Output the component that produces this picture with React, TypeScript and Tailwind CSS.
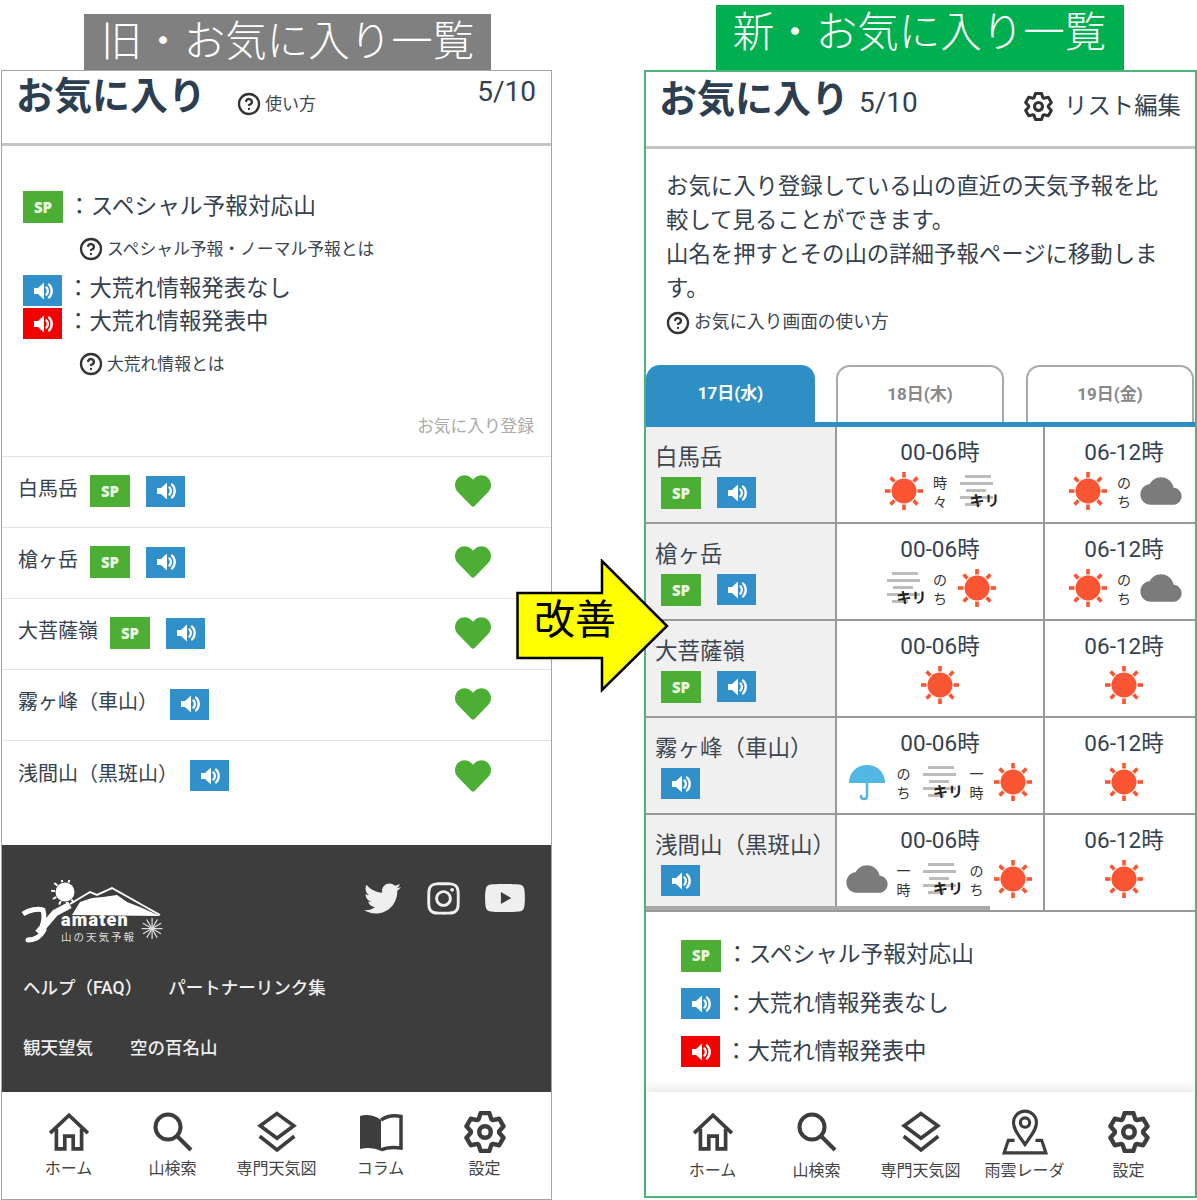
import React from 'react';
import { CircleHelp } from 'lucide-react';
import { FaHeart, FaInstagram, FaTwitter, FaYoutube } from 'react-icons/fa';
import { IoMdCloud } from 'react-icons/io';

const Speaker = () => (
  <svg viewBox="0 0 24 24" className="w-[24px] h-[24px]">
    <path d="M3 9h4l6-5.500v17L7 15H3z" fill="#fff" />
    <path d="M15.500 8.500c1.800 2 1.800 5 0 7M18 5.500c3.600 3.500 3.600 9.500 0 13" fill="none" stroke="#fff" strokeWidth="2.400" strokeLinecap="round" />
  </svg>
);

const SpBadge = () => (
  <span className="flex h-[32px] w-[40px] shrink-0 items-center justify-center bg-[#4cae34] font-['Open_Sans',sans-serif] text-[15px] font-extrabold text-[#e8f5e0]">
    SP
  </span>
);

const SoundBadge = ({ red }: { red?: boolean }) => (
  <span className={`flex h-[31px] w-[39px] shrink-0 items-center justify-center ${red ? 'bg-[#f50000]' : 'bg-[#3190c9]'}`}>
    <Speaker />
  </span>
);

const Help = ({ label, size }: { label: string; size: string }) => (
  <span className={`flex items-center gap-[4px] leading-none text-[#3b4650] ${size}`}>
    <CircleHelp size={24} strokeWidth={2.300} className="text-[#333]" />
    {label}
  </span>
);

const Sun = () => (
  <svg viewBox="0 0 40 40" className="w-[40px] h-[40px] shrink-0">
    <circle cx="20" cy="20" r="12.500" fill="#fa5532" />
    {[0, 45, 90, 135, 180, 225, 270, 315].map((a) => (
      <rect key={a} x="18.200" y="1" width="3.600" height="5.500" fill="#fa5532" transform={`rotate(${a} 20 20)`} />
    ))}
  </svg>
);

const Fog = () => (
  <span className="relative block h-[36px] w-[40px] shrink-0">
    <span className="absolute left-[8px] top-[2px] h-[3px] w-[26px] bg-[#bcbcbc]" />
    <span className="absolute left-[3px] top-[9px] h-[3px] w-[33px] bg-[#bcbcbc]" />
    <span className="absolute left-[9px] top-[16px] h-[3px] w-[20px] bg-[#bcbcbc]" />
    <span className="absolute left-[3px] top-[23px] h-[3px] w-[33px] bg-[#bcbcbc]" />
    <span className="absolute left-[8px] top-[30px] h-[3px] w-[16px] bg-[#bcbcbc]" />
    <span className="absolute left-[13px] top-[19px] whitespace-nowrap text-[15px] font-bold leading-[18px] text-[#222]">キリ</span>
  </span>
);

const Cloud = () => <IoMdCloud className="h-[44px] w-[44px] shrink-0 text-[#7b7b7b]" />;

const Umbrella = () => (
  <svg viewBox="0 0 40 40" className="w-[40px] h-[40px] shrink-0">
    <path d="M2 21C2 10 10 3 20 3s18 7 18 18z" fill="#53b7e3" />
    <path d="M20 20v14c0 4-6 4-6 0" fill="none" stroke="#53b7e3" strokeWidth="2.500" strokeLinecap="round" />
  </svg>
);

const Join = ({ a, b }: { a: string; b: string }) => (
  <span className="flex flex-col items-center pt-[4px] text-[14px] leading-[19px] text-[#333]">
    <span>{a}</span>
    <span>{b}</span>
  </span>
);

const Slot = ({ children }: { children: React.ReactNode }) => (
  <span className="flex w-[36.500px] justify-center">{children}</span>
);

const icons: Record<string, React.ReactNode> = {
  sun: <Sun />,
  fog: <Fog />,
  cloud: <Cloud />,
  rain: <Umbrella />,
  tokidoki: <Join a="時" b="々" />,
  nochi: <Join a="の" b="ち" />,
  ichiji: <Join a="一" b="時" />,
};

const HomeIcon = () => (
  <svg viewBox="0 0 40 40" fill="none" stroke="#3d3d3d" strokeWidth="3.500" className="h-[42px] w-[42px]">
    <path d="M2 21 20 4l18 17" />
    <path d="M8 17v19h8V24h8v12h8V17" />
  </svg>
);

const SearchIcon = () => (
  <svg viewBox="0 0 40 40" fill="none" stroke="#3d3d3d" strokeWidth="4" className="h-[40px] w-[40px]">
    <circle cx="15" cy="15" r="12.500" />
    <path d="m24 24 14 14" />
  </svg>
);

const LayersIcon = () => (
  <svg viewBox="0 0 40 40" fill="none" stroke="#3d3d3d" strokeWidth="3.500" className="h-[42px] w-[42px]">
    <path d="M20 2.500 36 14 20 26 4 14z" />
    <path d="M3.500 24 20 37l16.500-13" />
  </svg>
);

const BookIcon = () => (
  <svg viewBox="0 0 46 40" className="h-[40px] w-[46px]">
    <path d="M23 8C17 3 8 2 2 4v33c7-2 15-1 21 2z" fill="#3d3d3d" />
    <path d="M23 8c6-4 13-5 20-3.500V36c-7-1-14-1-20 2" fill="none" stroke="#3d3d3d" strokeWidth="3.500" />
  </svg>
);

const PinIcon = () => (
  <svg viewBox="0 0 46 44" fill="none" stroke="#3d3d3d" strokeWidth="3" className="h-[46px] w-[48px]">
    <path d="M23 34c-6-9-11-14-11-21a11 11 0 0 1 22 0c0 7-5 12-11 21z" />
    <circle cx="23" cy="13" r="4.500" />
    <path d="M13 30H7L3 42h40l-4-12h-6" />
  </svg>
);

// six square teeth, worked out from polar points
const gearPath = [0, 60, 120, 180, 240, 300]
  .flatMap((a) =>
    [
      [a - 27, 13.500],
      [a - 13, 18.500],
      [a + 13, 18.500],
      [a + 27, 13.500],
    ].map(([deg, r]) => {
      const rad = (deg * Math.PI) / 180;
      return `${(20 + r * Math.sin(rad)).toFixed(2)} ${(20 - r * Math.cos(rad)).toFixed(2)}`;
    }),
  )
  .join(' L');

const Gear = ({ size, color }: { size: string; color: string }) => (
  <svg viewBox="0 0 40 40" fill="none" stroke={color} strokeWidth="4.200" strokeLinejoin="round" className={size}>
    <path d={`M${gearPath}Z`} />
    <circle cx="20" cy="20" r="5.500" />
  </svg>
);

const GearIcon = () => <Gear size="h-[42px] w-[42px]" color="#3d3d3d" />;

const TabItem = ({ icon, label, gap }: { icon: React.ReactNode; label: string; gap: string }) => (
  <div className="flex w-[104px] flex-col items-center">
    <div className="flex h-[46px] items-center justify-center">{icon}</div>
    <span className={`whitespace-nowrap text-[16px] leading-[20px] text-[#444] ${gap}`}>{label}</span>
  </div>
);

const Logo = () => (
  <svg viewBox="0 0 145 65" className="h-[65px] w-[145px]">
    <circle cx="45" cy="12" r="9.500" fill="#fff" />
    {[170, 205, 240, 275, 310, 345, 20, 140].map((a) => (
      <rect key={a} x="44" y="-2" width="2" height="4" fill="#fff" transform={`rotate(${a} 45 12)`} />
    ))}
    <path d="M50 24 70 12l7 3L92 8l48 27" fill="none" stroke="#fff" strokeWidth="2" />
    <path d="M52 35 60 22l12-4 11-1 14-2 10 7 13 5 20 9z" fill="#fff" />
    <path d="M3 34C9 30 18 28 23 30 25 38 24 42 22 46" fill="none" stroke="#fff" strokeWidth="5" />
    <path d="M50 25 35 33 18 53" fill="none" stroke="#fff" strokeWidth="7" />
    <path d="M8 60c6 0 12-2 16-10" fill="none" stroke="#fff" strokeWidth="5" strokeLinecap="round" />
    <text x="41" y="46" fill="#fff" fontSize="18" fontWeight="900" letterSpacing="1.200">amaten</text>
    <text x="41" y="61" fill="#ddd" fontSize="10.500" letterSpacing="2">山の天気予報</text>
    {[0, 30, 60, 90, 120, 150].map((a) => (
      <rect key={a} x="131.500" y="38" width="1.200" height="21" fill="#ddd" transform={`rotate(${a} 132 48.500)`} />
    ))}
  </svg>
);

const TITLE = 'text-[38px] font-bold leading-[46px] text-[#2c3e50]';
const LEGEND = 'text-[22.400px] leading-[30px] text-[#34414e]';
const LEGEND_SP = 'text-[22.700px] leading-[30px] text-[#34414e]';

const oldRows = [
  { name: '白馬岳', sp: true },
  { name: '槍ヶ岳', sp: true },
  { name: '大菩薩嶺', sp: true },
  { name: '霧ヶ峰（車山）', sp: false },
  { name: '浅間山（黒斑山）', sp: false },
];

const weather = [
  { name: '白馬岳', sp: true, a: ['sun', 'tokidoki', 'fog'], b: ['sun', 'nochi', 'cloud'] },
  { name: '槍ヶ岳', sp: true, a: ['fog', 'nochi', 'sun'], b: ['sun', 'nochi', 'cloud'] },
  { name: '大菩薩嶺', sp: true, a: ['sun'], b: ['sun'] },
  { name: '霧ヶ峰（車山）', sp: false, a: ['rain', 'nochi', 'fog', 'ichiji', 'sun'], b: ['sun'] },
  { name: '浅間山（黒斑山）', sp: false, a: ['cloud', 'ichiji', 'fog', 'nochi', 'sun'], b: ['sun'] },
];

const WeatherCell = ({ time, items, border }: { time: string; items: string[]; border?: boolean }) => (
  <div className={`flex h-[97px] flex-col items-center border-b-2 border-[#999] bg-white pt-[10px] ${border ? 'border-r-2' : ''}`}>
    <span className="text-[22.500px] leading-[30px] text-[#34414e]">{time}</span>
    <div className="mt-[4px] flex h-[40px] items-center">
      {items.map((it, i) => (
        <Slot key={i}>{icons[it]}</Slot>
      ))}
    </div>
  </div>
);

const OldPanel = () => (
  <div className="ml-px flex h-[1130px] w-[551px] flex-col border border-[#a5a5a5] bg-white">
    <div className="flex h-[75px] shrink-0 items-start justify-between border-b-[3px] border-[#c4c4c4] pl-[14px] pr-[15px]">
      <div className="flex items-start pt-[2px]">
        <span className={TITLE}>お気に入り</span>
        <span className="ml-[31px] mt-[19px]">
          <Help label="使い方" size="text-[17px]" />
        </span>
      </div>
      <span className="mt-[3px] text-[28px] leading-[36px] text-[#34414e]">5/10</span>
    </div>
    <div className="flex h-[311px] shrink-0 flex-col border-b border-[#e3e3e3] pl-[21px]">
      <div className="mt-[45px] flex h-[32px] items-center gap-[5px]">
        <SpBadge />
        <span className={LEGEND_SP}>：スペシャル予報対応山</span>
      </div>
      <div className="ml-[56px] mt-[14px]">
        <Help label="スペシャル予報・ノーマル予報とは" size="text-[16.800px]" />
      </div>
      <div className="mt-[14px] flex h-[31px] items-center gap-[5px]">
        <SoundBadge />
        <span className={`${LEGEND} pb-[5px]`}>：大荒れ情報発表なし</span>
      </div>
      <div className="mt-[2px] flex h-[31px] items-center gap-[5px]">
        <SoundBadge red />
        <span className={`${LEGEND} pb-[5px]`}>：大荒れ情報発表中</span>
      </div>
      <div className="ml-[56px] mt-[13px]">
        <Help label="大荒れ情報とは" size="text-[16.800px]" />
      </div>
      <span className="mr-[17px] mt-[39px] self-end text-[16.700px] leading-[24px] text-[#aaa]">お気に入り登録</span>
    </div>
    {oldRows.map((r, i) => (
      <div key={r.name} className={`flex h-[71px] shrink-0 items-center justify-between pb-[2px] pl-[16px] pr-[60px] ${i < 4 ? 'border-b border-[#e3e3e3]' : ''}`}>
        <div className="flex items-center gap-[12px]">
          <span className="pb-[4px] text-[20px] leading-[28px] text-[#34414e]">{r.name}</span>
          {r.sp && <SpBadge />}
          <span className={r.sp ? 'ml-[4px]' : ''}>
            <SoundBadge />
          </span>
        </div>
        <FaHeart className="h-[36px] w-[36px] text-[#4cae34]" />
      </div>
    ))}
    <div className="mt-[33px] flex h-[247px] shrink-0 flex-col bg-[#3d3d3d] pl-[21px] pr-[25px]">
      <div className="flex items-start justify-between">
        <div className="-ml-[3px] mt-[35px]">
          <Logo />
        </div>
        <div className="mt-[32px] flex items-center text-[#efefef]">
          <FaTwitter className="h-[37px] w-[37px]" />
          <FaInstagram className="ml-[24px] h-[37px] w-[37px]" />
          <FaYoutube className="ml-[22px] h-[42px] w-[42px]" />
        </div>
      </div>
      <div className="mt-[30px] flex gap-[26px] text-[17.500px] leading-[26px] font-medium text-[#eee]">
        <span>ヘルプ（FAQ）</span>
        <span>パートナーリンク集</span>
      </div>
      <div className="mt-[34px] flex gap-[37px] text-[17.500px] leading-[26px] font-medium text-[#eee]">
        <span>観天望気</span>
        <span>空の百名山</span>
      </div>
    </div>
    <div className="flex flex-1 justify-center pt-[17px]">
      <TabItem gap="mt-[4px]" icon={<HomeIcon />} label="ホーム" />
      <TabItem gap="mt-[4px]" icon={<SearchIcon />} label="山検索" />
      <TabItem gap="mt-[4px]" icon={<LayersIcon />} label="専門天気図" />
      <TabItem gap="mt-[4px]" icon={<BookIcon />} label="コラム" />
      <TabItem gap="mt-[4px]" icon={<GearIcon />} label="設定" />
    </div>
  </div>
);

const NewPanel = () => (
  <div className="flex h-[1128px] w-[553px] flex-col border-2 border-[#4cb37a] bg-white">
    <div className="flex h-[77px] shrink-0 items-start justify-between border-b-[3px] border-[#c4c4c4] pl-[13px] pr-[14px]">
      <div className="flex items-end pt-[4px]">
        <span className={TITLE}>お気に入り</span>
        <span className="ml-[10px] pb-[1px] text-[28px] leading-[36px] text-[#34414e]">5/10</span>
      </div>
      <div className="mt-[18px] flex items-center gap-[11px]">
        <Gear size="h-[29px] w-[29px]" color="#333" />
        <span className="text-[23.400px] leading-[32px] text-[#34414e]">リスト編集</span>
      </div>
    </div>
    <div className="h-[216px] shrink-0 px-[20px] pt-[20px]">
      <p className="w-[500px] text-[22.400px] leading-[34px] text-[#34414e]">
        お気に入り登録している山の直近の天気予報を比較して見ることができます。
        <br />
        山名を押すとその山の詳細予報ページに移動します。
      </p>
      <div className="mt-[6px]">
        <Help label="お気に入り画面の使い方" size="text-[17.700px]" />
      </div>
    </div>
    <div className="flex h-[62px] shrink-0 items-stretch gap-[21px] border-b-[5px] border-[#2e8fc5]">
      <div className="flex w-[169px] items-center justify-center rounded-t-[14px] bg-[#2e8fc5] text-[17px] font-bold text-white">17日(水)</div>
      <div className="flex w-[168px] items-center justify-center rounded-t-[14px] border-2 border-b-0 border-[#aaa] text-[17px] font-bold text-[#888]">18日(木)</div>
      <div className="ml-px flex w-[168px] items-center justify-center rounded-t-[14px] border-2 border-b-0 border-[#aaa] text-[17px] font-bold text-[#888]">19日(金)</div>
    </div>
    <div className="relative grid shrink-0 grid-cols-[191px_208px_158px] overflow-hidden">
      {weather.map((w) => (
        <React.Fragment key={w.name}>
          <div className="flex h-[97px] flex-col border-b-2 border-r-2 border-[#999] bg-[#f0f0f0] pl-[9px] pt-[15px]">
            <span className="whitespace-nowrap text-[22.500px] leading-[30px] text-[#3b4650]">{w.name}</span>
            <div className="ml-[6px] mt-[5px] flex gap-[16px]">
              {w.sp && <SpBadge />}
              <SoundBadge />
            </div>
          </div>
          <WeatherCell time="00-06時" items={w.a} border />
          <WeatherCell time="06-12時" items={w.b} />
        </React.Fragment>
      ))}
      <div className="absolute bottom-[2px] left-0 h-[4px] w-[344px] bg-[#aaa]" />
    </div>
    <div className="flex shrink-0 flex-col gap-[17px] pl-[35px] pt-[28px]">
      <div className="flex h-[31px] items-center gap-[5px]">
        <SpBadge />
        <span className={`${LEGEND_SP} pb-[2px]`}>：スペシャル予報対応山</span>
      </div>
      <div className="flex h-[31px] items-center gap-[5px]">
        <SoundBadge />
        <span className={`${LEGEND} pb-[2px]`}>：大荒れ情報発表なし</span>
      </div>
      <div className="flex h-[31px] items-center gap-[5px]">
        <SoundBadge red />
        <span className={`${LEGEND} pb-[2px]`}>：大荒れ情報発表中</span>
      </div>
    </div>
    <div className="mt-auto flex h-[104px] shrink-0 justify-center pt-[17px] shadow-[0_-5px_8px_rgba(0,0,0,0.08)]">
      <TabItem gap="mt-[6px]" icon={<HomeIcon />} label="ホーム" />
      <TabItem gap="mt-[6px]" icon={<SearchIcon />} label="山検索" />
      <TabItem gap="mt-[6px]" icon={<LayersIcon />} label="専門天気図" />
      <TabItem gap="mt-[6px]" icon={<PinIcon />} label="雨雲レーダ" />
      <TabItem gap="mt-[6px]" icon={<GearIcon />} label="設定" />
    </div>
  </div>
);

export default function App() {
  return (
    <div className="relative flex h-[1200px] w-[1197px] gap-[92px] overflow-hidden bg-white font-['Roboto','Noto_Sans_CJK_JP',sans-serif]">
      <div className="flex flex-col">
        <div className="flex h-[70px] items-end justify-center">
          <div className="ml-[23px] flex h-[56px] w-[407px] items-center justify-center bg-[#808080] text-[41.500px] font-light text-white">
            旧・お気に入り一覧
          </div>
        </div>
        <OldPanel />
      </div>
      <div className="flex flex-col">
        <div className="flex h-[70px] items-end justify-center">
          <div className="-ml-[2px] flex h-[65px] w-[408px] items-center justify-center bg-[#00b050] pb-[8px] text-[41.500px] font-light text-white">
            新・お気に入り一覧
          </div>
        </div>
        <NewPanel />
      </div>
      {/* arrow sits over both panels */}
      <div className="absolute left-[516px] top-[559px] h-[134px] w-[154px]">
        <svg viewBox="0 0 154 134" className="h-full w-full">
          <path d="M1.500 34H86V2l65 65-65 64V99H1.500z" fill="#ff0" stroke="#000" strokeWidth="2.500" />
        </svg>
        <span className="absolute left-[18px] top-[36px] text-[41px] leading-[50px] text-black">改善</span>
      </div>
    </div>
  );
}
